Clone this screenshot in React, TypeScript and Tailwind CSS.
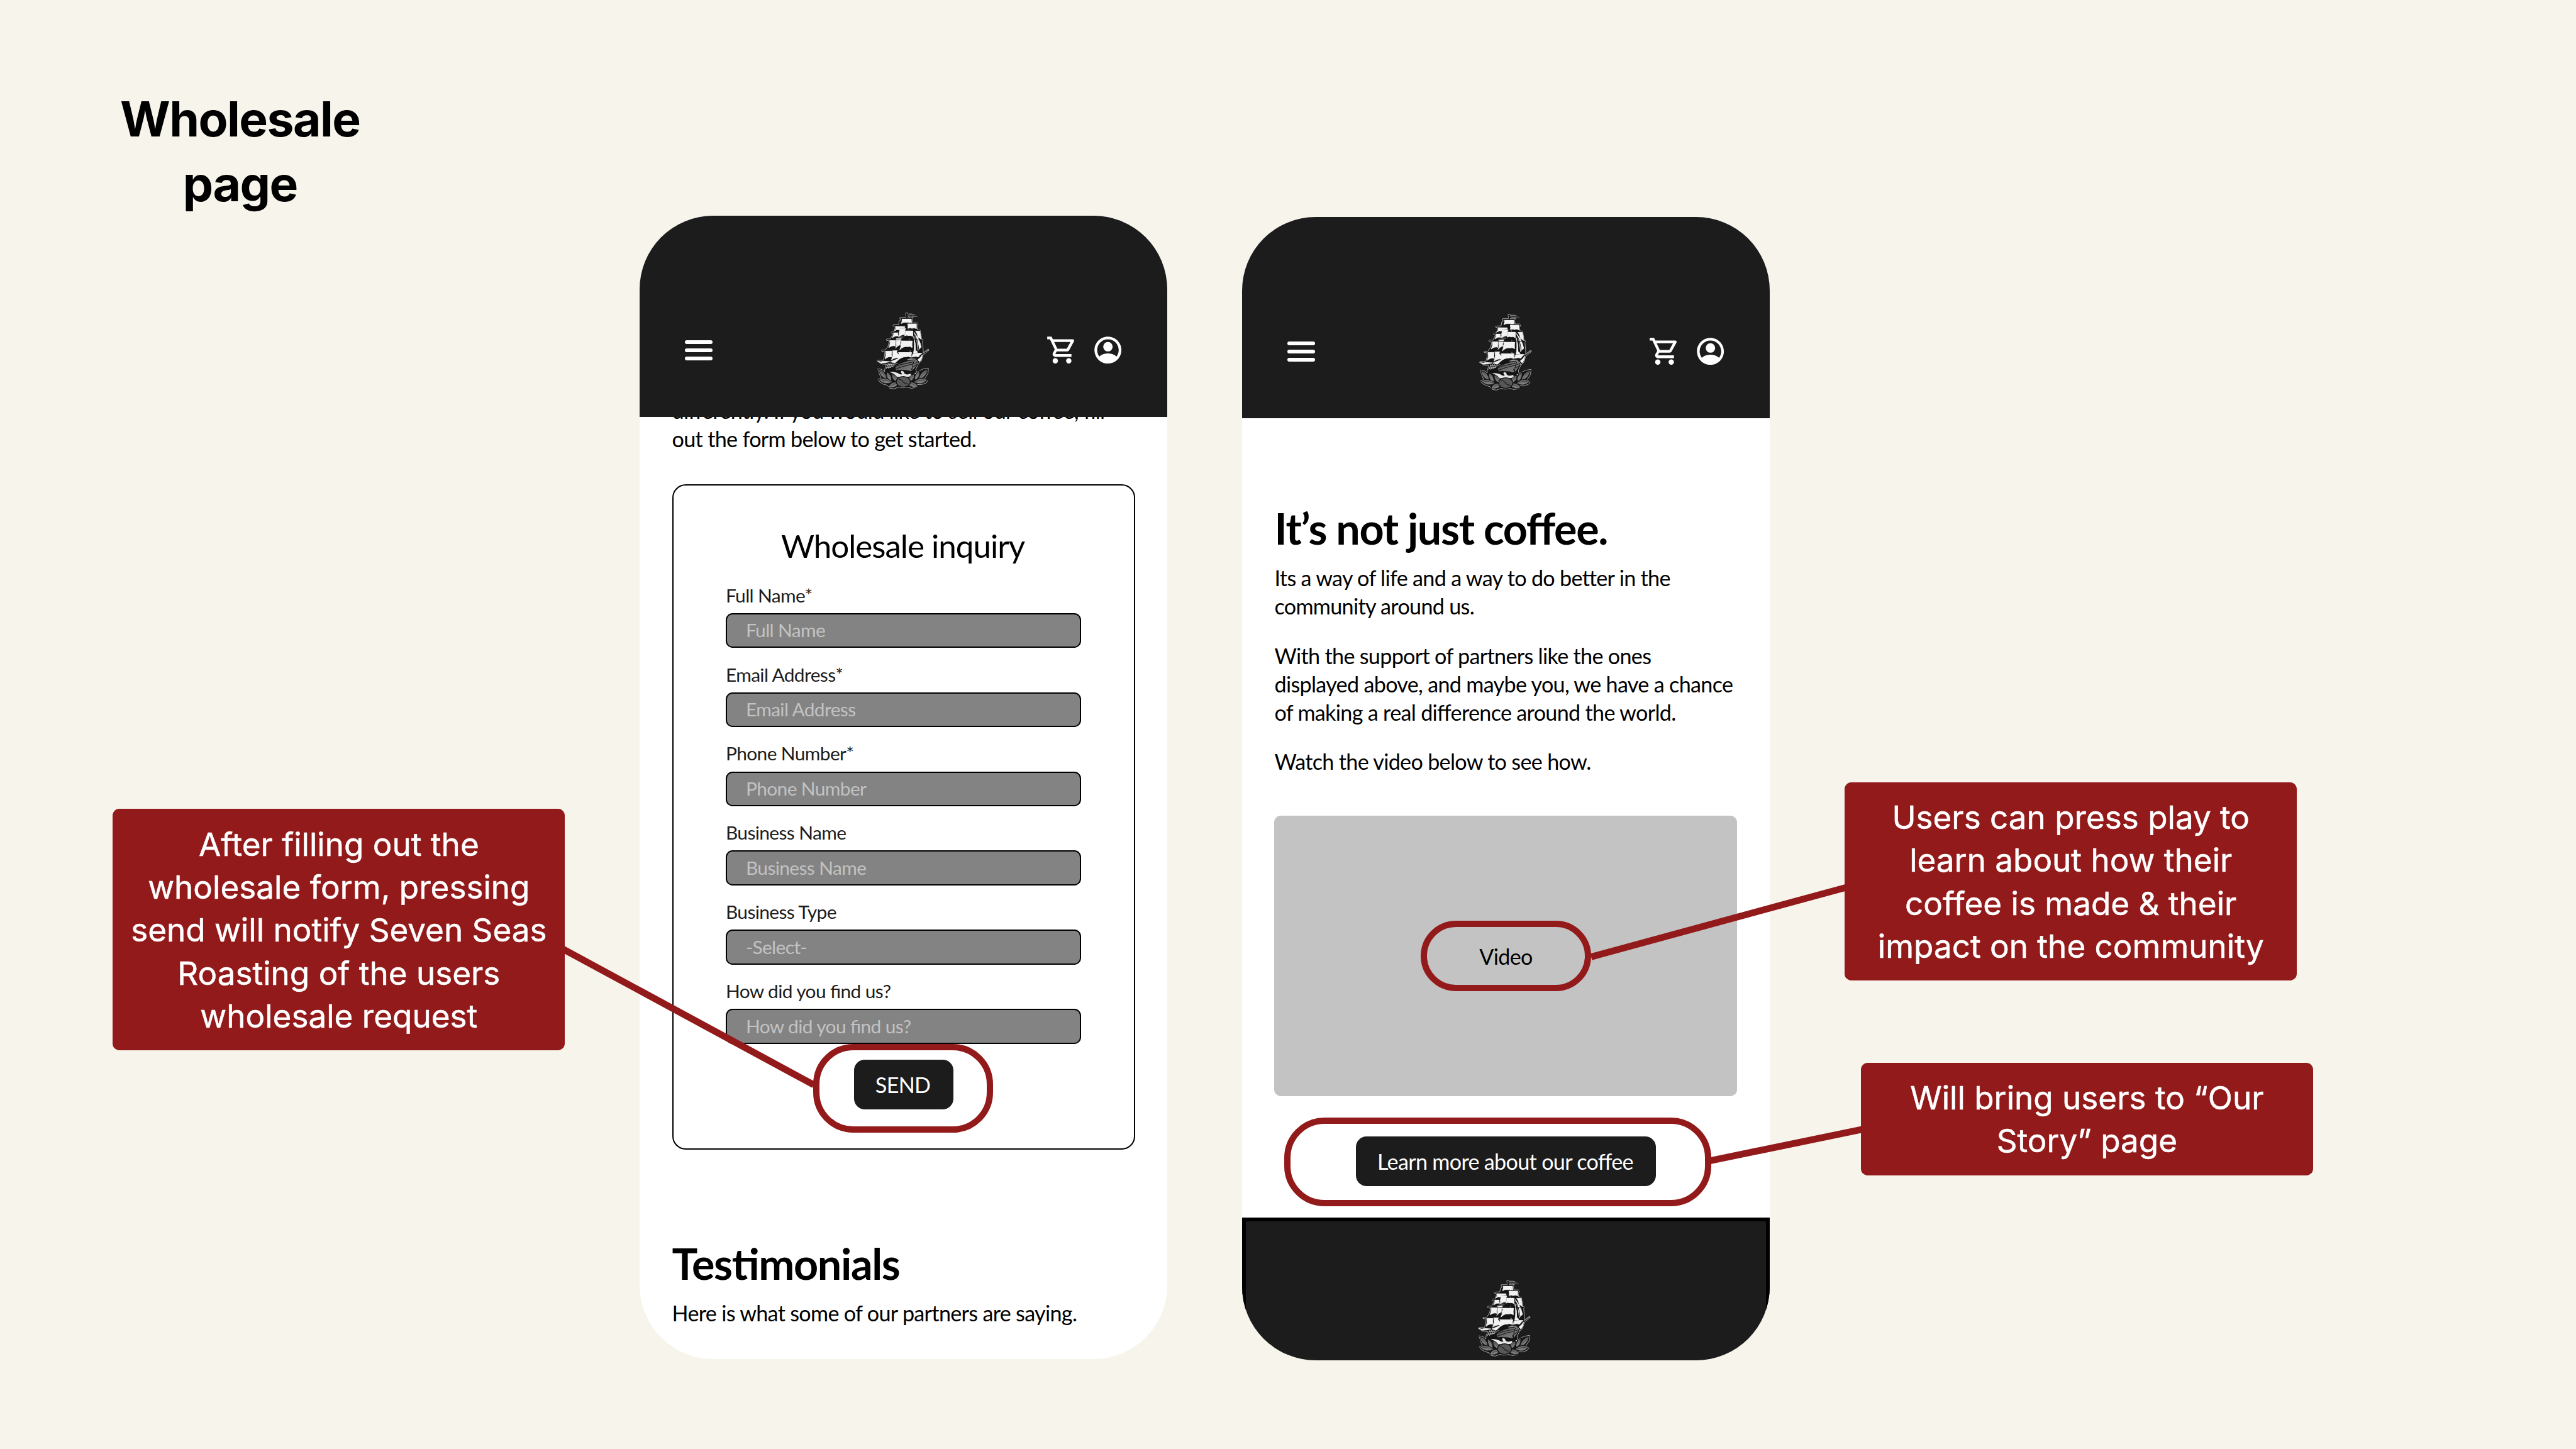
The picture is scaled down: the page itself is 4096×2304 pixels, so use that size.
import React from "react";
import { MdOutlineShoppingCart } from "react-icons/md";

const FIELDS = [
  { label: "Full Name*", placeholder: "Full Name" },
  { label: "Email Address*", placeholder: "Email Address" },
  { label: "Phone Number*", placeholder: "Phone Number" },
  { label: "Business Name", placeholder: "Business Name" },
  { label: "Business Type", placeholder: "-Select-" },
  { label: "How did you find us?", placeholder: "How did you find us?" },
];

function AccountIcon() {
  return (
    <svg viewBox="0 0 24 24" fill="currentColor" className="size-[51.4px]">
      <path
        fillRule="evenodd"
        d="M12 2C6.48 2 2 6.48 2 12s4.48 10 10 10 10-4.48 10-10S17.52 2 12 2zm6.36 14.83C16.93 15.09 13.46 14.5 12 14.5s-4.93.59-6.36 2.33C4.62 15.49 4 13.82 4 12c0-4.41 3.59-8 8-8s8 3.59 8 8c0 1.82-.62 3.49-1.64 4.83z"
      />
      <circle cx="12" cy="9.5" r="3.5" />
    </svg>
  );
}

/* Tall ship above a wreath of leaves with a coffee bean. */
function ShipLogo({ className }: { className: string }) {
  return (
    <svg viewBox="105 75 340 490" className={className} strokeLinejoin="round" strokeLinecap="round">
      <defs>
        <linearGradient id="hull" x1="0" y1="0" x2="1" y2="0.3">
          <stop offset="0" stopColor="#3a3a3a" />
          <stop offset="0.5" stopColor="#5f5f5f" />
          <stop offset="1" stopColor="#7c7c7c" />
        </linearGradient>
        <linearGradient id="leaf" x1="0" y1="0" x2="0" y2="1">
          <stop offset="0" stopColor="#5c5c5c" />
          <stop offset="1" stopColor="#8c8c8c" />
        </linearGradient>
      </defs>

      <path
        d="M290 86 L300 84 L303 92 L326 91 L345 97 L360 107 L335 107 L318 104 L303 110 L303 114 L336 113 L328 122 L333 146 L361 146 L366 158 L358 164 L362 188 L379 191 L383 215 L388 248 L398 252 L393 262 L397 300 L398 332 L430 309 L434 317 L398 346 L386 384 L368 402 L352 435 L357 455 L395 434 L430 428 L428 460 L408 491 L426 506 L415 521 L385 531 L362 530 L355 546 L325 554 L300 546 L270 551 L245 546 L215 557 L188 552 L176 535 L150 528 L128 515 L117 498 L137 492 L126 465 L116 431 L142 437 L158 450 L160 430 L170 404 L150 403 L132 400 L124 391 L111 386 L115 379 L150 379 L158 350 L160 326 L140 323 L141 316 L164 315 L180 290 L188 260 L168 254 L171 247 L194 247 L211 214 L198 209 L201 203 L216 200 L226 170 L210 165 L212 159 L245 158 L249 134 L254 133 L258 122 L250 118 L256 113 L290 113 Z"
        fill="#141414"
        stroke="#b4b4b4"
        strokeWidth="3.5"
      />
      <path d="M294 90 L295 116 M298 100 Q330 92 356 105" stroke="#0c0c0c" strokeWidth="5" fill="none" />
      <path d="M300 100 Q320 94 340 99" stroke="#8a8a8a" strokeWidth="3" fill="none" />

      {/* sails */}
      <g fill="#f2f2f2" stroke="#f2f2f2" strokeWidth="3.5">
        <path d="M267 122 L323 122 Q325 136 326 147 Q318 141 312 150 Q304 139 292 144 Q276 140 262 151 Q268 138 267 122Z" />
        <path d="M302 152 L356 152 Q354 168 356 183 Q340 174 328 181 Q318 174 303 181 Q306 166 302 152Z" />
        <path d="M229 169 L284 169 L283 177 L250 179 L247 190 Q234 184 221 196 Q230 183 229 169Z" />
        <path d="M250 182 L289 182 Q282 202 284 219 Q266 218 244 235 Q252 218 248 209 Q254 196 250 182Z" />
        <path d="M288 196 L334 196 Q333 215 334 231 Q320 222 308 226 Q296 220 282 228 Q291 212 288 196Z" />
        <path d="M215 207 L241 207 Q239 218 243 228 Q224 224 206 239 Q217 222 215 207Z" />
        <path d="M351 197 L376 197 Q383 225 384 249 Q376 240 366 236 Q362 214 351 197Z" />
        <path d="M342 207 L364 238 Q380 268 386 298 Q376 304 366 318 Q364 262 342 207Z" />
        <path d="M339 232 Q352 275 350 318 L362 326 L362 332 L338 334 Q348 290 339 232Z" />
        <path d="M191 257 L227 257 Q223 275 226 291 Q205 284 184 301 Q196 278 191 257Z" />
        <path d="M231 246 L262 244 Q252 262 254 283 Q238 288 226 304 Q236 285 230 274 Q235 260 231 246Z" />
        <path d="M261 259 L330 259 Q327 280 329 300 Q314 289 302 295 Q276 290 252 314 Q262 294 258 284 Q266 272 261 259Z" />
        <path d="M165 322 L202 322 Q198 344 202 359 Q180 353 160 372 Q170 345 165 322Z" />
        <path d="M208 317 L237 317 L232 328 Q240 340 250 348 L252 366 Q226 357 201 377 Q214 345 208 317Z" />
        <path d="M246 331 L326 331 Q321 346 325 361 Q306 351 290 358 Q266 356 238 381 Q254 356 246 331Z" />
        <path d="M334 340 Q362 332 390 336 Q376 344 368 358 Q352 352 330 359 Z" />
        <path d="M392 346 Q391 370 376 389 L364 376 Q382 364 392 346Z" />
        <path d="M118 386 Q136 392 150 385 L190 388 Q168 396 136 396 Z" />
        <path d="M196 388 Q226 376 246 368 Q240 384 222 396 Z" />
        <path d="M300 376 Q318 364 338 370 L350 372 Q328 378 300 376Z" opacity=".6" />
      </g>
      <path d="M346 222 Q366 262 370 312" stroke="#1a1a1a" strokeWidth="4" fill="none" />
      <path d="M245 233 Q262 226 274 234 M250 238 L272 238" stroke="#777777" strokeWidth="3" fill="none" />
      <path
        d="M262 119 L328 119 M300 149 L362 149 M214 163 L284 165 M286 192 L378 193 M200 205 L244 205 M172 251 L330 255 M334 252 L394 254 M144 319 L240 315 M244 327 L330 327"
        stroke="#151515"
        strokeWidth="4"
      />
      <path d="M396 336 L431 312" stroke="#b5b5b5" strokeWidth="5" />
      <path d="M396 336 L431 312" stroke="#2a2a2a" strokeWidth="2" />
      <path d="M311 320 L311 329 M318 320 L318 329 M309 186 L309 193 M312 246 L312 256" stroke="#cfcfcf" strokeWidth="2" />

      {/* rigging net */}
      <path
        d="M182 398 L168 432 M193 396 L181 430 M204 398 L194 426 M214 402 L207 420 M178 404 L222 408 M174 414 L216 418 M170 424 L204 426 M222 404 L238 398"
        stroke="#d8d8d8"
        strokeWidth="3"
        fill="none"
      />

      {/* hull */}
      <path d="M164 440 L206 424 Q262 386 345 375 Q364 384 363 404 L330 449 Q290 440 244 441 Q200 446 164 440Z" fill="url(#hull)" stroke="#111111" strokeWidth="4" />
      <path
        d="M180 438 Q250 402 340 390 M210 440 Q270 414 336 402 M345 377 Q328 410 330 447 M336 420 L360 404 M340 400 L362 392 M322 428 L330 446"
        stroke="#151515"
        strokeWidth="4"
        fill="none"
      />
      <path d="M164 441 L206 425 Q215 418 228 411 Q220 428 232 441 Q196 446 164 440Z" fill="#141414" />
      <path d="M340 376 Q362 374 367 402" stroke="#e8e8e8" strokeWidth="3" fill="none" />

      {/* wave */}
      <path
        d="M188 452 Q226 448 252 466 Q262 470 268 464 Q256 456 262 445 Q280 446 280 460 Q292 474 322 462 Q316 474 344 482 L312 480 Q290 486 262 480 L234 484 Q222 462 188 452Z"
        fill="#e6e6e6"
      />
      <path d="M196 462 Q222 462 232 482 L214 470Z" fill="#9a9a9a" />
      <path d="M340 462 L352 456 L350 466Z" fill="#e6e6e6" />

      {/* wreath */}
      <g fill="url(#leaf)" stroke="#121212" strokeWidth="3.5">
        <path d="M120 434 Q164 446 172 494 Q128 488 120 434Z" />
        <path d="M427 434 Q382 446 370 496 Q418 488 427 434Z" />
        <path d="M169 450 Q204 464 200 508 Q164 496 169 450Z" />
        <path d="M375 446 Q342 460 345 502 Q380 492 375 446Z" />
        <path d="M121 501 Q160 474 208 514 Q160 540 121 501Z" />
        <path d="M424 501 Q382 474 340 514 Q386 542 424 501Z" />
        <path d="M202 464 Q242 472 242 514 Q200 506 202 464Z" />
        <path d="M344 464 Q306 472 304 512 Q346 508 344 464Z" />
        <path d="M182 548 Q192 508 246 514 Q240 556 182 548Z" />
        <path d="M364 544 Q354 508 302 514 Q306 556 364 544Z" />
      </g>
      <path
        d="M130 444 Q150 462 164 486 M418 444 Q396 464 380 488 M140 503 Q170 500 196 513 M406 503 Q376 500 352 513 M212 476 Q228 490 236 506 M334 476 Q318 490 312 504 M196 540 Q216 524 238 522 M350 538 Q334 524 312 522"
        stroke="#2a2a2a"
        strokeWidth="2.5"
        fill="none"
      />
      <ellipse cx="274" cy="513" rx="44" ry="33" fill="#575757" stroke="#0f0f0f" strokeWidth="5" />
      <path d="M247 498 Q262 498 272 512 Q284 526 302 526" stroke="#141414" strokeWidth="4.5" fill="none" />
    </svg>
  );
}

function TopBar() {
  return (
    <header className="relative z-10 flex h-[320px] shrink-0 items-start bg-[#1c1c1c] text-white">
      <div className="ml-[72px] mt-[197.2px] flex w-[43.4px] flex-col gap-[7px]">
        <span className="h-[6px] rounded-full bg-white" />
        <span className="h-[6px] rounded-full bg-white" />
        <span className="h-[6px] rounded-full bg-white" />
      </div>
      <ShipLogo className="ml-[260.2px] mt-[151.5px] h-[125.4px] w-[87px]" />
      <MdOutlineShoppingCart className="ml-[183.2px] mt-[187.5px] size-[51.4px]" />
      <div className="ml-[21.2px] mt-[187.5px]">
        <AccountIcon />
      </div>
    </header>
  );
}

function FormPhone() {
  return (
    <section className="flex h-[1817.6px] w-[838.4px] flex-col overflow-hidden rounded-[117px] bg-white">
      <TopBar />
      <div className="px-[51.2px]">
        <p className="-mt-[32.7px] whitespace-nowrap text-[34.133px] leading-[44.8px]">
          differently. If you would like to sell our coffee, fill
          <br />
          out the form below to get started.
        </p>
        <form className="mt-[49.9px] flex h-[1058.1px] flex-col items-center rounded-[21.3px] border-2 border-black px-[84px] pt-[63px]">
          <h2 className="pr-[2px] text-[51.2px] leading-[64px]">Wholesale inquiry</h2>
          <div className="mt-[28.5px] flex w-[565.3px] flex-col gap-[23.2px]">
            {FIELDS.map((f) => (
              <label key={f.label} className="flex flex-col gap-[8.8px] text-[29.867px] leading-[38.4px] text-[#1c1c1c]">
                {f.label}
                <span className="flex h-[55.47px] items-center rounded-[10.7px] border-2 border-black bg-[#838383] pl-[30px] text-[#c2c2c2]">
                  {f.placeholder}
                </span>
              </label>
            ))}
          </div>
          <button
            type="button"
            className="mt-[25.2px] flex h-[78.9px] w-[157.9px] items-center justify-center rounded-[17px] bg-[#1c1c1c] pr-[2px] pt-[2px] text-[34.133px] leading-[44.8px] text-white"
          >
            SEND
          </button>
        </form>
        <h2 className="mt-[139.8px] text-[68.267px] font-bold leading-[82px]">Testimonials</h2>
        <p className="mt-[15.9px] whitespace-nowrap text-[34.133px] leading-[44.8px]">
          Here is what some of our partners are saying.
        </p>
      </div>
    </section>
  );
}

function StoryPhone() {
  return (
    <section className="mt-[2.1px] flex h-[1817.6px] w-[838.4px] flex-col overflow-hidden rounded-[117px] bg-white">
      <TopBar />
      <div className="flex flex-col px-[51.2px] pt-[133.1px]">
        <h2 className="text-[68.267px] font-bold leading-[82px]">It’s not just coffee.</h2>
        <div className="mt-[16.7px] flex flex-col gap-[34.1px] whitespace-nowrap text-[34.133px] leading-[44.8px]">
          <p>
            Its a way of life and a way to do better in the
            <br />
            community around us.
          </p>
          <p>
            With the support of partners like the ones
            <br />
            displayed above, and maybe you, we have a chance
            <br />
            of making a real difference around the world.
          </p>
          <p>Watch the video below to see how.</p>
        </div>
        <div className="mt-[62.9px] flex h-[445.9px] items-center justify-center rounded-[10.7px] bg-[#c3c3c3] pt-[2px] text-[34.133px] leading-[44.8px]">
          Video
        </div>
        <button
          type="button"
          className="mt-[63.6px] flex h-[78.9px] w-[477.6px] items-center justify-center self-center rounded-[17px] bg-[#1c1c1c] pr-[2px] pt-[2px] text-[34.133px] leading-[44.8px] text-white"
        >
          Learn more about our coffee
        </button>
      </div>
      <footer className="mt-auto flex h-[226.6px] shrink-0 justify-center border-x-[6.4px] border-t-[6.4px] border-black bg-[#1c1c1c]">
        <ShipLogo className="-ml-[3px] mt-[90.4px] h-[125.4px] w-[87px]" />
      </footer>
    </section>
  );
}

const CALLOUT =
  "absolute flex items-center justify-center rounded-[10.7px] bg-[#931a1a] text-center font-['Inter',sans-serif] text-[51.2px] leading-[68.267px] whitespace-nowrap text-white [-webkit-text-stroke:0.5px_white]";
const RING = "absolute border-[10.5px] border-[#931a1a]";

/* Review notes drawn over the mockups. */
function Annotations() {
  return (
    <>
      <svg viewBox="0 0 4096 2304" className="absolute inset-0 h-full w-full" stroke="#931a1a" strokeWidth="10.7">
        <line x1="890" y1="1506.2" x2="1294" y2="1725" />
        <line x1="2530" y1="1521.5" x2="2940" y2="1409.8" />
        <line x1="2720" y1="1845.5" x2="2966" y2="1794.7" />
      </svg>
      <div className={`${RING} left-[1292.9px] top-[1659.8px] h-[140.8px] w-[285.9px] rounded-[64px]`} />
      <div className={`${RING} left-[2259px] top-[1463.5px] h-[112.8px] w-[271px] rounded-[56.4px]`} />
      <div className={`${RING} left-[2041.6px] top-[1776.8px] h-[141px] w-[679px] rounded-[64px]`} />
      <div className={`${CALLOUT} left-[179.4px] top-[1286.4px] h-[384px] w-[718.9px]`}>
        After filling out the
        <br />
        wholesale form, pressing
        <br />
        send will notify Seven Seas
        <br />
        Roasting of the users
        <br />
        wholesale request
      </div>
      <div className={`${CALLOUT} left-[2933.3px] top-[1243.7px] h-[315.7px] w-[718.9px]`}>
        Users can press play to
        <br />
        learn about how their
        <br />
        coffee is made &amp; their
        <br />
        impact on the community
      </div>
      <div className={`${CALLOUT} left-[2958.9px] top-[1689.6px] h-[179.2px] w-[718.9px]`}>
        Will bring users to “Our
        <br />
        Story” page
      </div>
    </>
  );
}

export default function App() {
  return (
    <main className="relative flex h-[2304px] w-[4096px] items-start overflow-hidden bg-[#f6f4eb] font-['Lato',sans-serif] text-black [font-feature-settings:'liga','kern']">
      <h1 className="ml-[141.8px] mt-[139.2px] w-[480px] text-center font-['Inter',sans-serif] text-[76.8px] font-bold leading-[102.4px] tracking-[-0.02em]">
        Wholesale
        <br />
        page
      </h1>
      <div className="ml-[395.6px] mt-[343.4px] flex items-start gap-[119.5px] [&_*]:tracking-[-0.02em]">
        <FormPhone />
        <StoryPhone />
      </div>
      <Annotations />
    </main>
  );
}
